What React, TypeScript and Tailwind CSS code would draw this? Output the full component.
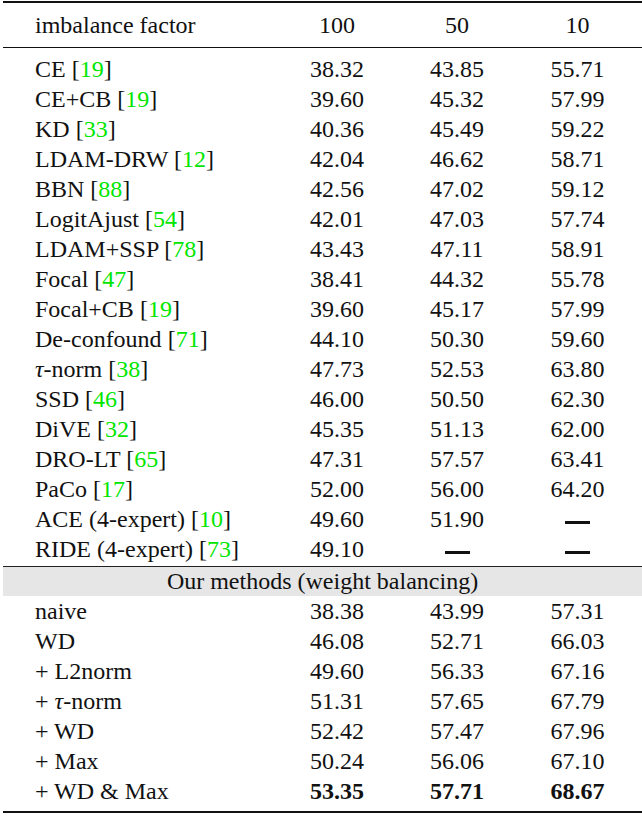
const baseRows = [
  { name: "CE", cite: "19", v: ["38.32", "43.85", "55.71"] },
  { name: "CE+CB", cite: "19", v: ["39.60", "45.32", "57.99"] },
  { name: "KD", cite: "33", v: ["40.36", "45.49", "59.22"] },
  { name: "LDAM-DRW", cite: "12", v: ["42.04", "46.62", "58.71"] },
  { name: "BBN", cite: "88", v: ["42.56", "47.02", "59.12"] },
  { name: "LogitAjust", cite: "54", v: ["42.01", "47.03", "57.74"] },
  { name: "LDAM+SSP", cite: "78", v: ["43.43", "47.11", "58.91"] },
  { name: "Focal", cite: "47", v: ["38.41", "44.32", "55.78"] },
  { name: "Focal+CB", cite: "19", v: ["39.60", "45.17", "57.99"] },
  { name: "De-confound", cite: "71", v: ["44.10", "50.30", "59.60"] },
  { name: "tau", cite: "38", v: ["47.73", "52.53", "63.80"] },
  { name: "SSD", cite: "46", v: ["46.00", "50.50", "62.30"] },
  { name: "DiVE", cite: "32", v: ["45.35", "51.13", "62.00"] },
  { name: "DRO-LT", cite: "65", v: ["47.31", "57.57", "63.41"] },
  { name: "PaCo", cite: "17", v: ["52.00", "56.00", "64.20"] },
  { name: "ACE (4-expert)", cite: "10", v: ["49.60", "51.90", "—"] },
  { name: "RIDE (4-expert)", cite: "73", v: ["49.10", "—", "—"] },
];

const ourRows = [
  { name: "naive", v: ["38.38", "43.99", "57.31"] },
  { name: "WD", v: ["46.08", "52.71", "66.03"] },
  { name: "+ L2norm", v: ["49.60", "56.33", "67.16"] },
  { name: "+ tau", v: ["51.31", "57.65", "67.79"] },
  { name: "+ WD", v: ["52.42", "57.47", "67.96"] },
  { name: "+ Max", v: ["50.24", "56.06", "67.10"] },
  { name: "+ WD & Max", v: ["53.35", "57.71", "68.67"], bold: true },
];

function Label({ name }: { name: string }) {
  if (name === "tau") {
    return (
      <>
        <span className="italic">τ</span>-norm
      </>
    );
  }
  if (name === "+ tau") {
    return (
      <>
        + <span className="italic">τ</span>-norm
      </>
    );
  }
  return <>{name}</>;
}

function Cell({ value, bold }: { value: string; bold?: boolean }) {
  if (value === "—") {
    return (
      <div className="flex items-center justify-center">
        <span className="mt-[6px] inline-block h-[3px] w-[25px] bg-[#111]" />
      </div>
    );
  }
  return <div className={bold ? "text-center font-bold" : "text-center"}>{value}</div>;
}

function Row({ children, values, bold }: { children: React.ReactNode; values: string[]; bold?: boolean }) {
  return (
    <div className="grid h-[30px] grid-cols-[274px_120px_120px_121px] items-center">
      <div className="pl-[32px]">{children}</div>
      {values.map((v, i) => (
        <Cell key={i} value={v} bold={bold} />
      ))}
    </div>
  );
}

export default function App() {
  return (
    <div className="min-h-screen bg-white">
      <div className="ml-[3px] w-[639px] font-['Liberation_Serif','Times_New_Roman',serif] text-[24px] leading-[30px] text-[#111]">
        <div className="mt-[1px] h-[2px] bg-[#111]" />
        <div className="py-[7px]">
          <Row values={["100", "50", "10"]}>imbalance factor</Row>
        </div>
        <div className="h-[1px] bg-[#111]" />
        <div className="pt-[6px] pb-[2px]">
          {baseRows.map((r) => (
            <Row key={r.name} values={r.v}>
              <Label name={r.name} /> [<span className="text-[#00e600]">{r.cite}</span>]
            </Row>
          ))}
        </div>
        <div className="h-[1px] bg-[#222]" />
        <div className="h-[29px] bg-[#e6e6e6] text-center leading-[28px]">Our methods (weight balancing)</div>
        <div className="pb-[5px]">
          {ourRows.map((r) => (
            <Row key={r.name} values={r.v} bold={r.bold}>
              <Label name={r.name} />
            </Row>
          ))}
        </div>
        <div className="h-[2px] bg-[#111]" />
      </div>
    </div>
  );
}
